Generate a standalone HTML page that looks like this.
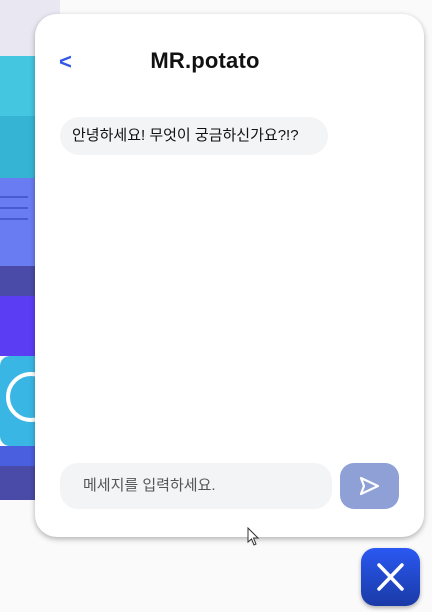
<!DOCTYPE html>
<html><head><meta charset="utf-8"><style>
*{margin:0;padding:0;box-sizing:border-box}
html,body{width:432px;height:612px;overflow:hidden;background:#fafafa;font-family:"Liberation Sans","Noto Sans CJK KR",sans-serif}
.bg{position:absolute;left:0;top:0;width:60px;height:612px}
.panel{position:absolute;left:35px;top:14px;width:389px;height:523px;background:#fff;border-radius:22px;box-shadow:0 2px 6px rgba(0,0,0,.3)}
.back{position:absolute;left:24px;top:35px;color:#3458e8;font-size:22px;font-weight:bold}
.title{position:absolute;left:0;width:340px;text-align:center;top:34px;font-size:22px;font-weight:900;color:#111;letter-spacing:0.2px}
.bubble{position:absolute;left:25px;top:103px;width:268px;height:38px;background:#f3f4f5;border-radius:19px;font-size:15px;font-weight:400;line-height:38px;padding-left:12px;color:#111}
.input{position:absolute;left:25px;top:449px;width:272px;height:46px;background:#f3f4f5;border-radius:18px;font-size:15px;line-height:46px;padding-left:23px;color:#555}
.send{position:absolute;left:305px;top:449px;width:59px;height:46px;background:#8ea0d6;border-radius:14px}
.close{position:absolute;left:361px;top:548px;width:59px;height:58px;border-radius:14px;background:linear-gradient(#2a58f2,#1a3aa6);box-shadow:0 2px 4px rgba(0,0,0,.3)}
</style></head><body>
<div class="bg">
<div style="position:absolute;left:0;top:0;width:60px;height:56px;background:#e9e8f2"></div>
<div style="position:absolute;left:0;top:56px;width:60px;height:60px;background:#45c6e0"></div>
<div style="position:absolute;left:0;top:116px;width:60px;height:62px;background:#35b4d4"></div>
<div style="position:absolute;left:0;top:178px;width:60px;height:88px;background:#6a7cf2"></div>
<div style="position:absolute;left:0;top:196px;width:28px;height:2px;background:#4a5ad0"></div>
<div style="position:absolute;left:0;top:207px;width:28px;height:2px;background:#4a5ad0"></div>
<div style="position:absolute;left:0;top:218px;width:28px;height:2px;background:#4a5ad0"></div>
<div style="position:absolute;left:0;top:266px;width:60px;height:30px;background:#4a4aa8"></div>
<div style="position:absolute;left:0;top:296px;width:60px;height:60px;background:#5b3ef4"></div>
<div style="position:absolute;left:0;top:356px;width:60px;height:90px;background:#3ab6e4;border-radius:10px 0 0 10px"></div>
<div style="position:absolute;left:6px;top:372px;width:50px;height:50px;border:4px solid #fff;border-radius:50%"></div>
<div style="position:absolute;left:0;top:446px;width:60px;height:20px;background:#4a5ee0"></div>
<div style="position:absolute;left:0;top:466px;width:60px;height:34px;background:#4a4aa8"></div>
</div>
<div class="panel">
<div class="back">&lt;</div>
<div class="title">MR.potato</div>
<div class="bubble">안녕하세요! 무엇이 궁금하신가요?!?</div>
<div class="input">메세지를 입력하세요.</div>
<div class="send"><svg width="59" height="46" viewBox="0 0 59 46"><path d="M21 15 L38 23 L21 31 L24 23 Z" fill="none" stroke="#fff" stroke-width="2.2" stroke-linejoin="round"/></svg></div>
</div>
<div class="close"><svg width="59" height="58" viewBox="0 0 59 58"><path d="M18 17 L41 41 M41 17 L18 41" stroke="#fff" stroke-width="3.5" stroke-linecap="round"/></svg></div>
<svg style="position:absolute;left:247px;top:527px" width="14" height="20" viewBox="0 0 14 20"><path d="M1 1 L1 15 L4.5 12 L7 18 L9 17 L6.5 11 L11 11 Z" fill="#fff" stroke="#333" stroke-width="1"/></svg>
</body></html>
